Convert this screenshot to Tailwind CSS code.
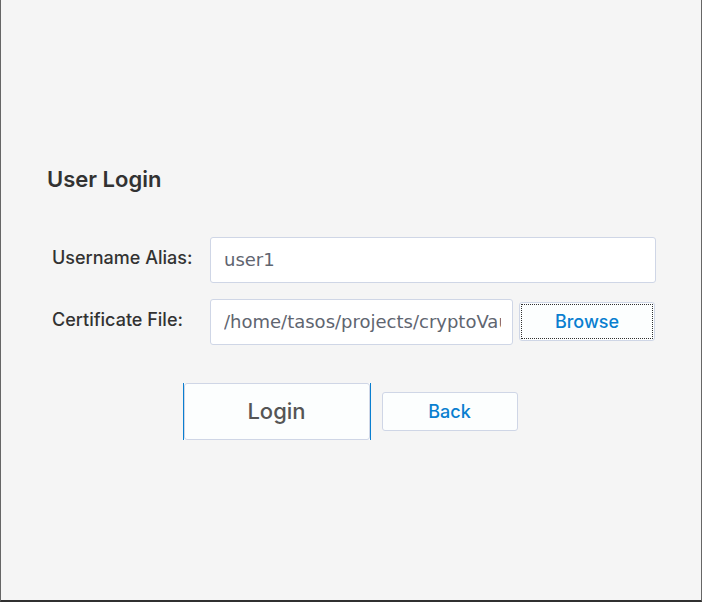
<!DOCTYPE html>
<html lang="en">
<head>
<meta charset="utf-8">
<meta name="viewport" content="width=device-width, initial-scale=1">
<title>User Login</title>
<script src="https://cdn.jsdelivr.net/npm/@tailwindcss/browser@4"></script>
</head>
<body class="bg-[#f5f5f5] font-['Inter',sans-serif] text-[#323232]">
<main class="flex min-h-screen flex-col justify-center border-x border-b-2 border-x-[#666666] border-b-[#303030] pr-[45px] pl-[46px]">
  <h1 class="text-[22px] leading-[38px] font-semibold">User Login</h1>
  <form class="mt-[39px] pl-[5px]">
    <div class="grid grid-cols-[158px_minmax(0,1fr)] gap-y-4">
      <label for="alias" class="pt-2 text-[18px] leading-[26px] font-medium">Username Alias:</label>
      <input id="alias" type="text" value="user1" class="h-[46px] w-full rounded-[3px] border border-[#cfd6e6] bg-white pr-[11px] pl-[13px] pb-[2px] font-['DejaVu_Sans',sans-serif] text-[18px] text-[#5f6570] outline-none">
      <label for="cert" class="pt-2 text-[18px] leading-[26px] font-medium">Certificate File:</label>
      <div class="flex items-start gap-[6px] pr-px">
        <input id="cert" type="text" value="/home/tasos/projects/cryptoVault" class="h-[46px] min-w-0 flex-1 rounded-[3px] border border-[#cfd6e6] bg-white pr-[11px] pl-[13px] pb-[2px] font-['DejaVu_Sans',sans-serif] text-[18px] text-[#5f6570] outline-none">
        <button type="button" class="mt-[3px] h-[39px] w-[136px] rounded-[3px] border border-[#cfd6e6] bg-[#fcfefe] p-px text-[18px] font-medium text-[#0a7fd0]"><span class="flex h-full items-center justify-center border border-dotted border-[#303030]">Browse</span></button>
      </div>
    </div>
    <div class="mt-[38px] flex items-center justify-center gap-[11px] pr-2">
      <button type="submit" class="flex h-[57px] w-[188px] items-center justify-center border-x border-[#0a7fd0] bg-[#fcfefe] text-[22px] font-medium text-[#555555]"><span class="flex h-full w-full items-center justify-center rounded-[3px] border border-[#cfd6e6]">Login</span></button>
      <button type="button" class="h-[39px] w-[136px] rounded-[3px] border border-[#cfd6e6] bg-[#fcfefe] text-[18px] font-medium text-[#0a7fd0]">Back</button>
    </div>
  </form>
</main>
</body>
</html>
